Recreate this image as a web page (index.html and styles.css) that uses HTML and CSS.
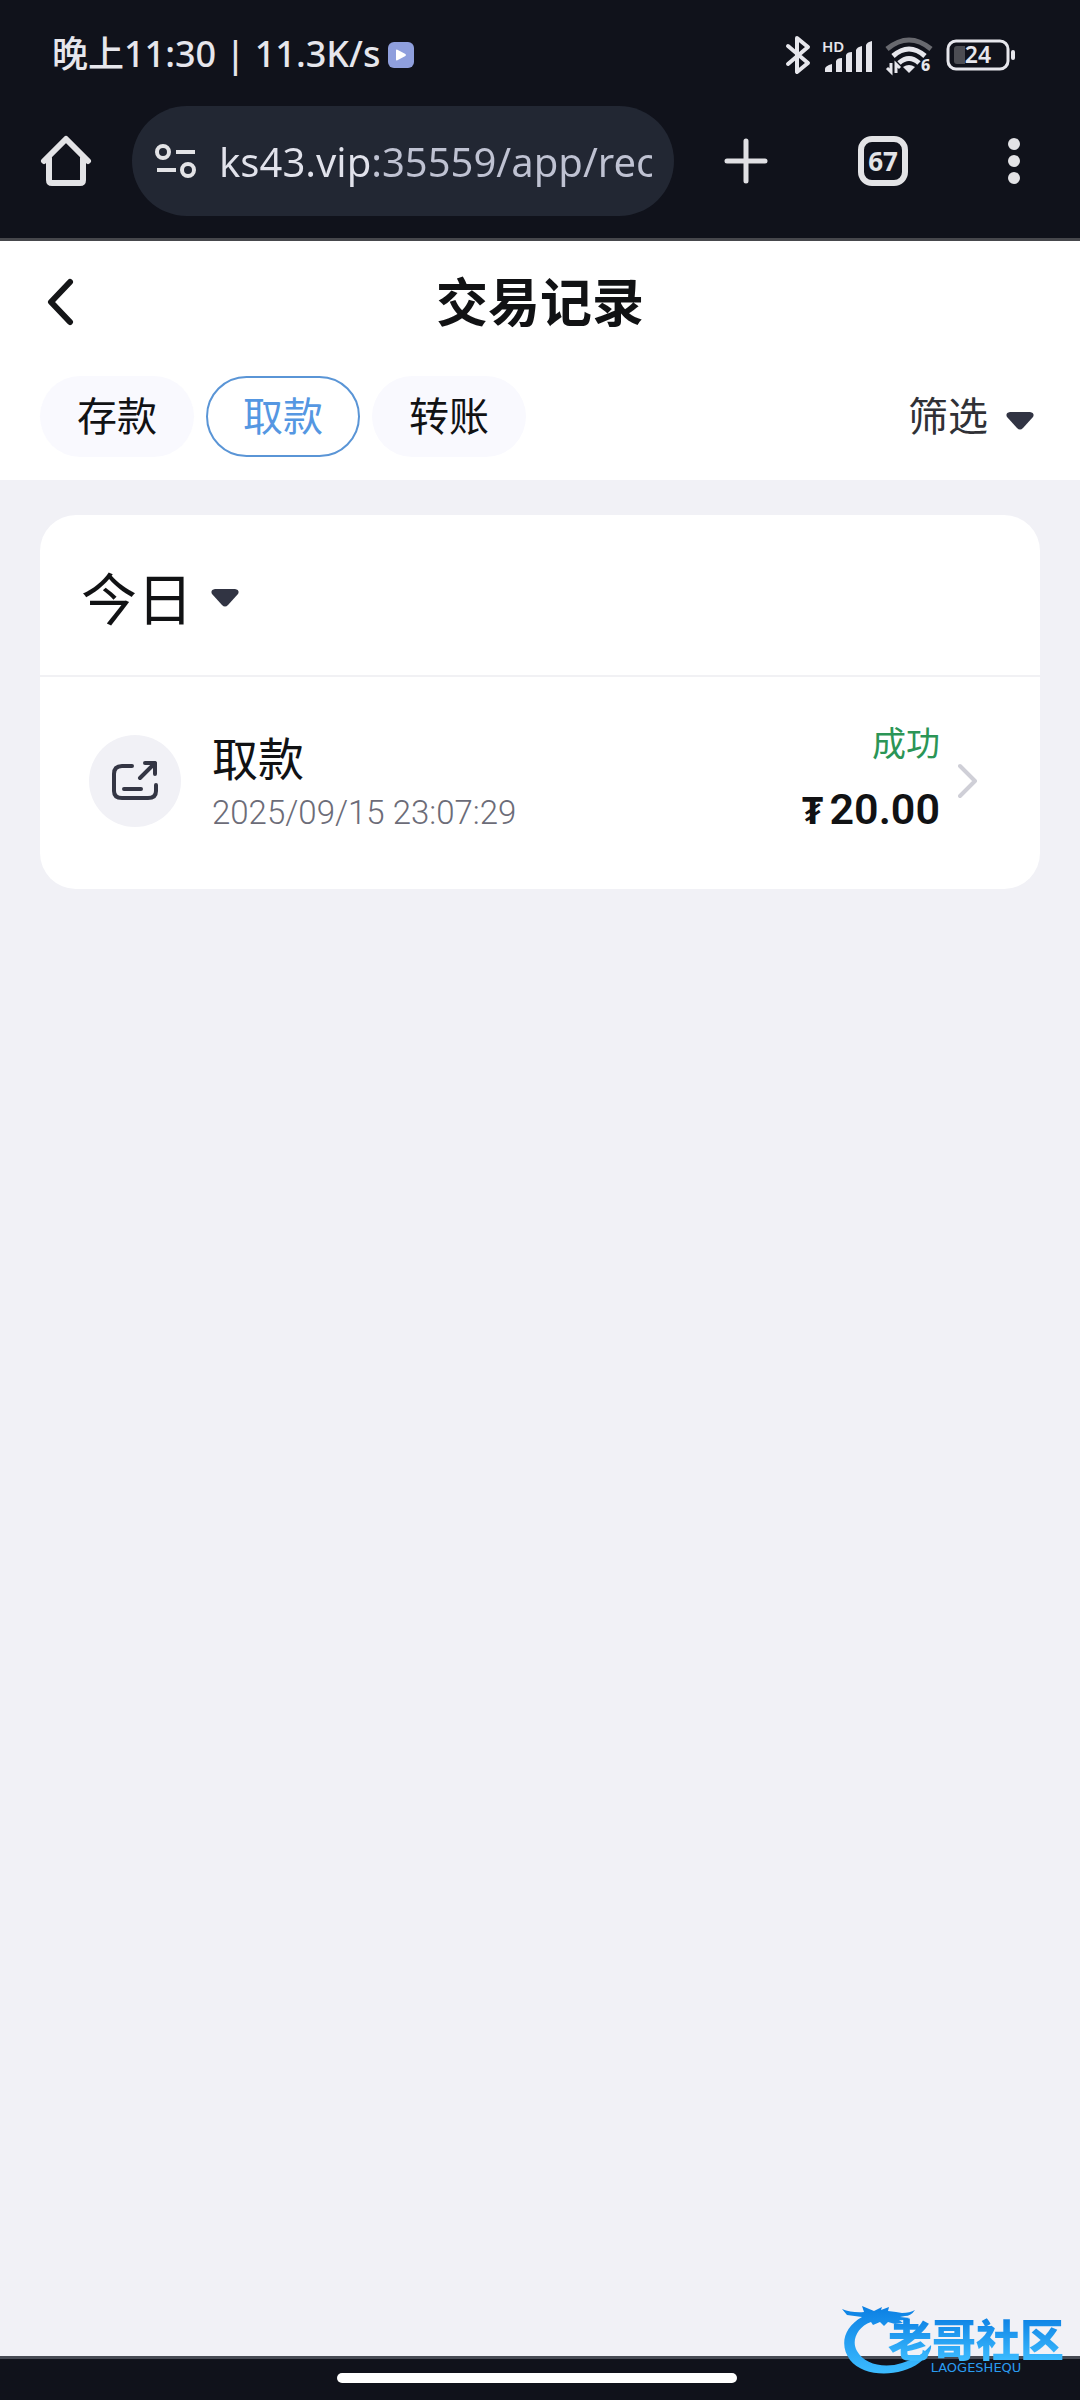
FILE: index.html
```html
<!DOCTYPE html>
<html lang="zh-CN">
<head>
	<meta charset="UTF-8">
	<meta name="viewport" content="width=device-width, initial-scale=1">
	<title>交易记录</title>
	<link rel="stylesheet" href="styles.css">
</head>
<body>

	<!-- 系统状态栏 + 浏览器地址栏 -->
	<header class="browser">
		<div class="status">
			<span class="time">晚上11:30 | 11.3K/s</span>
			<svg class="play" width="26" height="26" viewBox="0 0 26 26"><rect width="26" height="26" rx="6" fill="#8f9fdd"/><path d="M8 8.500v9q0 1.500 1.400.8l8-4.300q1.200-1 0-1.900l-8-4.400q-1.400-.7-1.400.8z" fill="#fff"/></svg>
			<div class="signals">
				<svg width="26" height="40" viewBox="0 0 26 40" fill="none" stroke="#e6e6ec" stroke-width="4" stroke-linejoin="round" stroke-linecap="round"><path d="M3 11l20 17-11 9V3l11 9L3 29"/></svg>
				<svg width="52" height="38" viewBox="0 0 52 38" fill="#e6e6ec">
					<text x="0" y="16" class="hd">HD</text>
					<path d="M3 36v-3q0-3 7-5v8zM14 36V25q1-3 6-3v14zM24 36V19q1-3 6-3v20zM34 36V14q1-3 6-4v26zM44 36V9q1-3 6-4v31z"/>
				</svg>
				<svg width="48" height="42" viewBox="0 0 48 42" fill="none" stroke="#e6e6ec" stroke-width="5">
					<path d="M2 15q22-18 44 0" stroke="#68696f"/>
					<path d="M8 22q16-14 32 0M14 29q10-9 20 0"/>
					<path d="M18 33q6-4 12 0l-6 6z" fill="#e6e6ec" stroke="none"/>
					<path d="M6 29v9l-4-4M11 39v-9l4 4" stroke-width="3"/>
					<text x="36" y="37" class="gen">6</text>
				</svg>
				<svg class="battery" width="70" height="32" viewBox="0 0 70 32">
					<rect x="2" y="2" width="60" height="28" rx="8" fill="none" stroke="#e6e6ec" stroke-width="3"/>
					<path d="M11 7h8v18h-8q-3 0-3-3V10q0-3 3-3z" fill="#4c4d53"/>
					<rect x="65" y="11" width="4" height="10" rx="2" fill="#e6e6ec"/>
					<text x="32" y="24" class="level">24</text>
				</svg>
			</div>
		</div>
		<div class="toolbar">
			<button class="tool" aria-label="主页">
				<svg width="52" height="52" viewBox="0 0 52 52" fill="none" stroke="#e3e3e6" stroke-width="6" stroke-linecap="round" stroke-linejoin="round"><path d="M4 26L26 4l22 22M9 23v22q0 3 3 3h28q3 0 3-3V23"/></svg>
			</button>
			<div class="address">
				<svg width="42" height="36" viewBox="0 0 42 36" fill="none" stroke="#e3e3e6" stroke-width="4"><circle cx="8" cy="9" r="6"/><circle cx="33" cy="27" r="6"/><path d="M21 9h19M2 27h19"/></svg>
				<input class="url" type="text" aria-label="网址" value="ks43.vip:35559/app/rec">
			</div>
			<div class="tools">
				<button class="tool" aria-label="新标签页">
					<svg width="44" height="46" viewBox="0 0 44 46" stroke="#e0e0e4" stroke-width="5" stroke-linecap="round"><path d="M3 23h38M22 3v40"/></svg>
				</button>
				<button class="tool tab-count" aria-label="67 个标签页">67</button>
				<button class="tool" aria-label="更多">
					<svg width="12" height="46" viewBox="0 0 12 46" fill="#e3e3e6"><circle cx="6" cy="6" r="6"/><circle cx="6" cy="23" r="6"/><circle cx="6" cy="40" r="6"/></svg>
				</button>
			</div>
		</div>
	</header>

	<!-- 页面标题和分类 -->
	<div class="head">
		<div class="nav">
			<button class="back" aria-label="返回">
				<svg width="28" height="48" viewBox="0 0 28 48" fill="none" stroke="#151618" stroke-width="6" stroke-linecap="round" stroke-linejoin="round"><path d="M24 4L5 24l19 20"/></svg>
			</button>
			<h1>交易记录</h1>
		</div>
		<div class="filters">
			<button class="tab">存款</button>
			<button class="tab active">取款</button>
			<button class="tab">转账</button>
			<button class="filter">筛选
				<svg width="28" height="18" viewBox="0 0 28 18" fill="#313443"><path d="M4 0h20q5 1 3 5L17 16q-3 3-6 0L1 5Q-1 1 4 0z"/></svg>
			</button>
		</div>
	</div>

	<!-- 记录列表 -->
	<main class="list">
		<section class="card">
			<button class="day">今日
				<svg width="28" height="18" viewBox="0 0 28 18" fill="#313443"><path d="M4 0h20q5 1 3 5L17 16q-3 3-6 0L1 5Q-1 1 4 0z"/></svg>
			</button>
			<a class="record" href="#">
				<span class="icon">
					<svg width="48" height="40" viewBox="0 0 48 40" fill="none" stroke="#343644" stroke-width="4" stroke-linecap="round" stroke-linejoin="round"><path d="M21 5H11Q3 5 3 13v17q0 7 8 7h26q8 0 8-7v-6M13 28h17M34 2h10v11M44 2L29 17"/></svg>
				</span>
				<span class="info">
					<span class="type">取款</span>
					<span class="date">2025/09/15 23:07:29</span>
				</span>
				<span class="result">
					<span class="state">成功</span>
					<span class="amount"><span class="unit">₮</span>20.00</span>
				</span>
				<svg width="20" height="36" viewBox="0 0 20 36" fill="none" stroke="#cfcfd7" stroke-width="4" stroke-linecap="round" stroke-linejoin="round"><path d="M2 3l15 15L2 33"/></svg>
			</a>
		</section>
	</main>

	<!-- 底部手势条 -->
	<footer class="gesture">
		<div class="bar"></div>
		<div class="mark">
			<svg class="dragon" width="90" height="70" viewBox="0 0 90 70">
				<defs>
					<linearGradient id="blue" x1="0" y1="0" x2="0" y2="1">
						<stop offset="0" stop-color="#0b7fe3"/>
						<stop offset="1" stop-color="#3cbcff"/>
					</linearGradient>
				</defs>
				<path fill="url(#blue)" d="M0 4q10 4 22 3l-2-6 12 5 8-4-1 3 8-3-1 4 8 1 6 1q8 0 13-3-4 6-10 6l-5 1 10 1q-6 3-11 2l4 3-8 1-7-2-4 4-4-4-7 3-2-3C15 22 9 36 15 46c7 13 27 18 45 12 14-4 23-11 29-18 1 6-4 12-12 18C58 72 22 73 8 55-3 40 2 22 20 12L5 10z"/>
			</svg>
			<div class="mark-text">
				<span class="mark-name">老哥社区</span>
				<span class="mark-en">LAOGESHEQU</span>
			</div>
		</div>
	</footer>

</body>
</html>
```
FILE: styles.css
```css
* {
	margin: 0;
	padding: 0;
	box-sizing: border-box;
}
body {
	display: flex;
	flex-direction: column;
	min-height: 100vh;
	background: #f1f1f6;
	color: #111214;
	font-family: "Noto Sans", "Noto Sans CJK SC", sans-serif;
}
button, input {
	border: 0;
	background: none;
	color: inherit;
	font: inherit;
}
svg {
	display: block;
	flex: none;
}
/* 顶部 */
.browser {
	background: #10121b;
	border-bottom: 3px solid #46474c;
}
.status {
	display: flex;
	align-items: center;
	height: 106px;
	padding: 4px 64px 0 52px;
	color: #e6e6ec;
}
.time {
	font-size: 36px;
	font-weight: 500;
	line-height: 48px;
	padding-bottom: 2px;
	white-space: nowrap;
}
.play {
	margin-left: 8px;
}
.signals {
	display: flex;
	align-items: center;
	gap: 11px;
	margin-left: auto;
}
.battery {
	margin-left: 2px;
}
.signals text {
	fill: #e6e6ec;
	stroke: none;
	font-weight: 600;
}
.signals .hd {
	font-size: 15px;
}
.signals .gen {
	font-size: 16px;
	font-weight: 800;
}
.signals .level {
	font-size: 23px;
	text-anchor: middle;
}
.toolbar {
	display: flex;
	align-items: center;
	padding: 0 60px 22px 40px;
}
.tool {
	display: flex;
	align-items: center;
	justify-content: center;
}
.address {
	display: flex;
	align-items: center;
	flex: 1;
	gap: 22px;
	min-width: 0;
	height: 110px;
	margin-left: 40px;
	padding: 0 22px 0 23px;
	border-radius: 55px;
	background: #222733;
}
.url {
	flex: 1;
	min-width: 0;
	font-size: 40px;
	/* 域名亮一些，端口和路径暗一些 */
	background: linear-gradient(90deg, #e1e2eb 154px, #bfc2d2 154px);
	-webkit-background-clip: text;
	background-clip: text;
	color: transparent;
}
.tools {
	display: flex;
	align-items: center;
	gap: 90px;
	margin-left: 50px;
}
.tab-count {
	width: 50px;
	height: 50px;
	border: 6px solid #e3e3e6;
	border-radius: 14px;
	color: #e3e3e6;
	font-size: 26px;
	font-weight: 700;
}
.tools .tool:last-child {
	margin-left: 10px;
}
/* 标题 */
.head {
	background: #fff;
	padding: 0 40px 23px;
}
.nav {
	display: grid;
	grid-template-columns: 60px 1fr 60px;
	align-items: center;
	height: 135px;
	padding-bottom: 14px;
}
.back {
	width: 40px;
	padding-left: 6px;
}
.nav h1 {
	font-size: 52px;
	font-weight: 700;
	line-height: 60px;
	text-align: center;
}
.filters {
	display: flex;
	align-items: center;
	gap: 12px;
	font-size: 40px;
}
.tab {
	width: 154px;
	height: 81px;
	padding-bottom: 6px;
	border-radius: 41px;
	background: #f9f9fe;
}
.tab.active {
	border: 2px solid #5a95d6;
	background: #fff;
	color: #5597e2;
}
.filter {
	display: flex;
	align-items: center;
	gap: 18px;
	margin-left: auto;
	padding: 0 6px 6px 0;
	color: #303136;
}
.filter svg {
	margin-top: 14px;
}
/* 列表 */
.list {
	flex: 1;
	padding: 35px 40px;
}
.card {
	border-radius: 36px;
	background: #fff;
	overflow: hidden;
}
.day {
	display: flex;
	align-items: center;
	gap: 18px;
	width: 100%;
	height: 162px;
	padding-left: 41px;
	border-bottom: 2px solid #f1f1f4;
	font-size: 56px;
}
.day svg {
	margin-top: 6px;
}
.record {
	display: flex;
	align-items: center;
	height: 212px;
	padding: 0 62px 4px 49px;
	color: inherit;
	text-decoration: none;
}
.icon {
	display: flex;
	align-items: center;
	justify-content: center;
	width: 92px;
	height: 92px;
	border-radius: 50%;
	background: #f1f1f6;
}
.info, .result {
	display: flex;
	flex-direction: column;
}
.info {
	margin-left: 31px;
	padding-top: 8px;
}
.type {
	font-size: 46px;
	line-height: 56px;
}
.date {
	color: #6c6c78;
	font-family: Roboto, sans-serif;
	font-size: 33px;
	font-weight: 300;
	line-height: 54px;
}
.result {
	align-items: flex-end;
	margin: 0 18px 0 auto;
}
.state {
	color: #2b9556;
	font-size: 34px;
	line-height: 56px;
}
.amount {
	display: flex;
	align-items: center;
	gap: 6px;
	font-family: Roboto, sans-serif;
	font-size: 43px;
	font-weight: 600;
	line-height: 76px;
}
.unit {
	font-family: "Noto Sans", sans-serif;
	font-size: 38px;
	font-weight: 700;
}
/* 底部 */
.gesture {
	position: relative;
	height: 44px;
	padding-top: 14px;
	border-top: 3px solid #464a53;
	background: #10121b;
}
.bar {
	width: 37%;
	height: 10px;
	margin-left: 31.2%;
	border-radius: 5px;
	background: #fff;
}
/* 水印浮在页面右下角 */
.mark {
	position: absolute;
	right: 16px;
	bottom: 25px;
	display: flex;
	align-items: center;
}
.dragon {
	margin-right: -44px;
}
.mark-text {
	display: flex;
	flex-direction: column;
	align-items: center;
	padding-top: 10px;
	color: #2a9cf0;
}
.mark-name {
	font-family: "Noto Sans CJK SC", sans-serif;
	font-size: 44px;
	font-weight: 900;
	line-height: 46px;
	background: linear-gradient(#0b7fe3, #3cbcff);
	-webkit-background-clip: text;
	background-clip: text;
	color: transparent;
}
.mark-en {
	font-family: "DejaVu Sans", sans-serif;
	font-size: 13px;
	line-height: 14px;
}
```
